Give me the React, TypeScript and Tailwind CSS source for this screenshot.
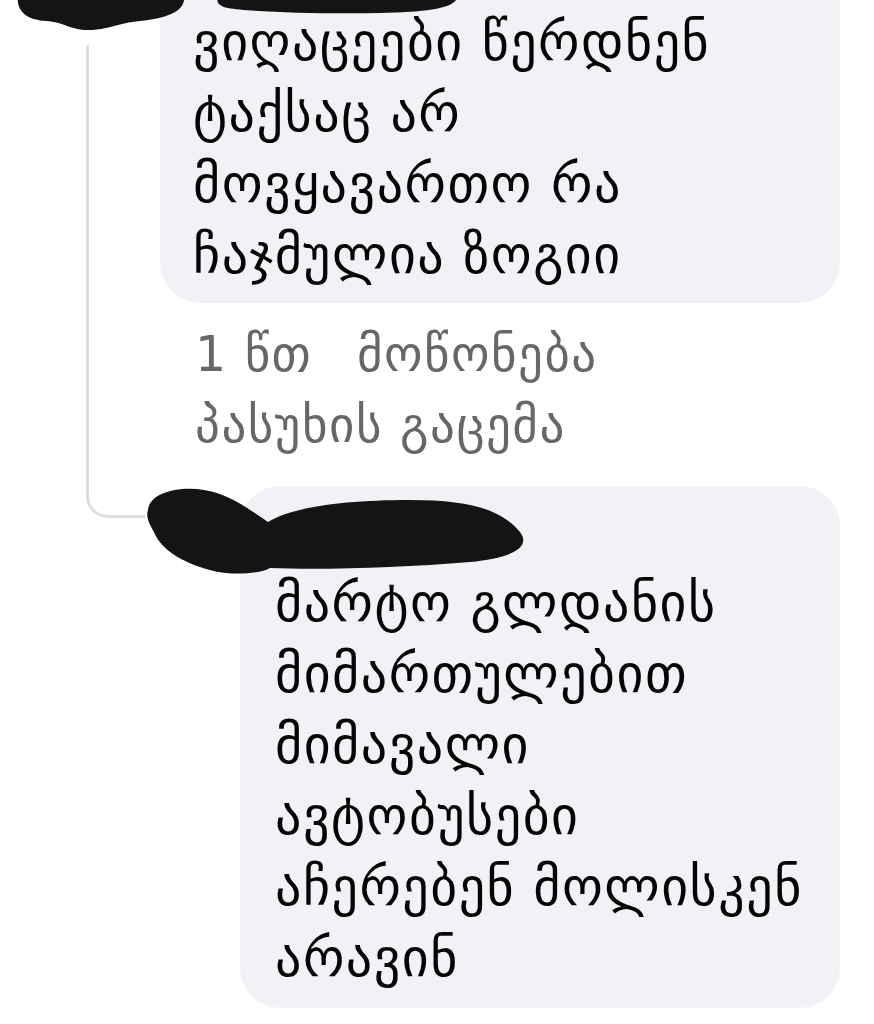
import React from 'react';

const ink = '#141414';

const firstLines = ['ვიღაცეები წერდნენ', 'ტაქსაც არ', 'მოვყავართო რა', 'ჩაჯმულია ზოგიი'];
const replyLines = ['მარტო გლდანის', 'მიმართულებით', 'მიმავალი', 'ავტობუსები', 'აჩერებენ მოლისკენ', 'არავინ'];

// scribble that hides the author's name
const NameScribble = () => (
    <svg width="400" height="100" viewBox="0 0 400 100" className="block">
        <path
            fill={ink}
            d="M8 28 C10 10 40 4 64 8 C90 12 110 28 128 40 C150 26 200 18 270 18 C330 18 362 28 380 50 C392 66 370 76 330 80 C260 86 180 88 130 86 C120 92 90 94 70 88 C40 80 20 66 14 50 C8 40 6 34 8 28 Z"
        />
    </svg>
);

const TopScribble = () => (
    <svg width="480" height="36" viewBox="0 0 480 36" className="block">
        <g fill={ink}>
            <path d="M18 -4 L184 -4 C186 10 170 18 140 21 C118 23 108 30 88 30 C70 30 64 22 46 21 C28 20 16 12 18 -4 Z" />
            <path d="M218 -4 L458 -4 C456 8 430 12 380 13 C320 14 250 12 228 8 C218 6 216 2 218 -4 Z" />
        </g>
    </svg>
);

const App = () => {
    return (
        <main className="w-[874px] h-[1024px] bg-white overflow-hidden relative" style={{ fontFamily: '"DejaVu Sans", sans-serif' }}>
            {/* top name, cut off */}
            <div className="absolute left-0 top-0">
                <TopScribble />
            </div>

            <div className="flex">
                {/* thread connector */}
                <div className="w-[160px] shrink-0">
                    <div className="ml-[86px] mt-[45px] h-[473px] w-[59px] border-l-[3px] border-b-[3px] border-[#dadde1] rounded-bl-[22px]" />
                </div>

                <div className="flex-1 pr-[34px]">
                    {/* comment bubble */}
                    <div className="bg-[#f0f2f5] rounded-b-[40px] pl-[33px] pt-[7px] pb-[12px] text-[52px] tracking-[1.5px] leading-[71px] text-[#050505]">
                        {firstLines.map((l) => (
                            <div key={l}>{l}</div>
                        ))}
                    </div>

                    {/* actions */}
                    <div className="pl-[35px] pt-[16px] text-[49px] tracking-[1.5px] leading-[71px] text-[#65676b]">
                        <div className="flex">
                            <span className="w-[162px]">1 წთ</span>
                            <span>მოწონება</span>
                        </div>
                        <div>პასუხის გაცემა</div>
                    </div>

                    {/* reply */}
                    <div className="flex mt-[25px] relative">
                        <div className="w-[80px] shrink-0" />
                        <div className="flex-1 bg-[#f0f2f5] rounded-[40px] pl-[35px] pb-[14px] text-[52px] tracking-[1.5px] leading-[71px] text-[#050505]">
                            <div className="h-[82px]" />
                            {replyLines.map((l) => (
                                <div key={l}>{l}</div>
                            ))}
                        </div>
                        <div className="absolute left-[-20px] top-[-4px]">
                            <NameScribble />
                        </div>
                    </div>
                </div>
            </div>
        </main>
    );
};

export default App;
